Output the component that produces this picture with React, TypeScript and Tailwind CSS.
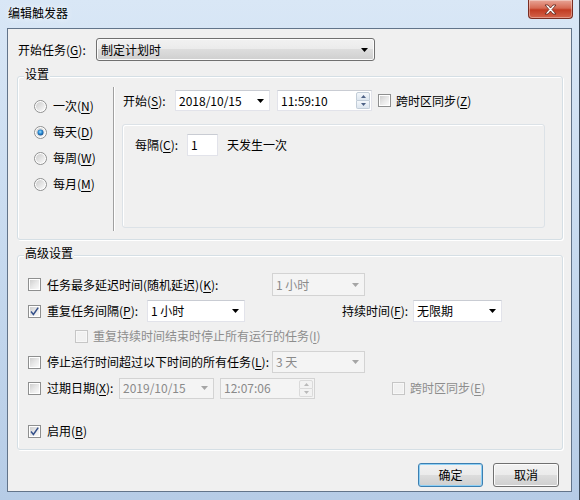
import type { ReactNode } from 'react';

function Key({ children }: { children: ReactNode }) {
  return <span className="underline decoration-1 underline-offset-[2px]">{children}</span>;
}

function CheckBox({ checked = false, disabled = false }: { checked?: boolean; disabled?: boolean }) {
  return (
    <span
      className={`flex h-[13px] w-[13px] shrink-0 items-center justify-center border p-[1px] ${
        disabled ? 'border-[#c6c6c6] bg-[#f7f7f7]' : 'border-[#8e8f8f] bg-white'
      }`}
    >
      <span
        className={`relative flex h-full w-full items-center justify-center ${
          disabled ? 'bg-[#f1f1f1]' : 'bg-gradient-to-br from-[#cfcfcf] via-[#e8e8e8] to-[#fafafa]'
        }`}
      >
        {checked && (
          <svg width="11" height="11" viewBox="0 0 11 11" className="absolute">
            <path d="M2 5.5 L4.4 8.4 L9.2 1.6" fill="none" stroke="#34508a" strokeWidth="1.5" />
          </svg>
        )}
      </span>
    </span>
  );
}

function Radio({ checked = false }: { checked?: boolean }) {
  return (
    <svg width="13" height="13" viewBox="0 0 13 13" className="shrink-0">
      <defs>
        <linearGradient id="rbg" x1="0" y1="0" x2="1" y2="1">
          <stop offset="0" stopColor="#cdcdcd" />
          <stop offset="1" stopColor="#fafafa" />
        </linearGradient>
        <radialGradient id="rdot" cx="0.45" cy="0.4" r="0.6">
          <stop offset="0" stopColor="#9fe0ff" />
          <stop offset="0.5" stopColor="#2f8fd6" />
          <stop offset="1" stopColor="#134f8f" />
        </radialGradient>
      </defs>
      <circle cx="6.5" cy="6.5" r="6" fill="#fff" stroke="#8e8f8f" />
      <circle cx="6.5" cy="6.5" r="4.5" fill="url(#rbg)" />
      {checked && <circle cx="6.5" cy="6.5" r="3" fill="url(#rdot)" />}
    </svg>
  );
}

function Arrow({ disabled = false }: { disabled?: boolean }) {
  return (
    <svg width="7" height="4" viewBox="0 0 7 4" className="shrink-0">
      <path d="M0 0H7L3.5 4Z" fill={disabled ? '#a5a5a5' : '#000'} />
    </svg>
  );
}

function Spin({ disabled = false }: { disabled?: boolean }) {
  const c = disabled ? '#b9b9b9' : '#4d6185';
  const box = disabled
    ? 'border-[#dadada] bg-[#f2f2f2]'
    : 'border-[#c2cdd8] bg-gradient-to-b from-[#f4f7fb] to-[#dde6ef]';
  return (
    <div className="mr-[1px] flex h-[17px] w-[14px] shrink-0 flex-col">
      <div className={`flex flex-1 items-center justify-center rounded-t-[2px] border ${box}`}>
        <svg width="5" height="3" viewBox="0 0 5 3">
          <path d="M0 3H5L2.5 0Z" fill={c} />
        </svg>
      </div>
      <div className={`flex flex-1 items-center justify-center rounded-b-[2px] border border-t-0 ${box}`}>
        <svg width="5" height="3" viewBox="0 0 5 3">
          <path d="M0 0H5L2.5 3Z" fill={c} />
        </svg>
      </div>
    </div>
  );
}

function Field({
  text,
  w,
  h = 'h-[22px]',
  kind = 'arrow',
  disabled = false,
}: {
  text: string;
  w: string;
  h?: string;
  kind?: 'arrow' | 'spin' | 'none';
  disabled?: boolean;
}) {
  return (
    <div
      className={`flex ${w} ${h} shrink-0 items-center border ${
        disabled
          ? 'border-[#d3d3d3] bg-[#f4f4f4] text-[#8a8a8a]'
          : 'border-[#e2e3ea] border-t-[#c9ccd3] bg-white text-black'
      }`}
    >
      <span className="flex-1 pl-[3px] leading-[16px]">{text}</span>
      {kind === 'arrow' && (
        <div className="flex h-full w-[17px] items-center justify-center">
          <Arrow disabled={disabled} />
        </div>
      )}
      {kind === 'spin' && <Spin disabled={disabled} />}
    </div>
  );
}

function Group({ title, h, children }: { title: string; h: string; children: ReactNode }) {
  return (
    <div
      className={`relative ml-[9px] w-[546px] ${h} rounded-[3px] border border-[#d5dfe5] shadow-[inset_1px_1px_0_#ffffff,1px_1px_0_#ffffff]`}
    >
      <span className="absolute -top-[11px] left-[6px] bg-[#f0f0f0] px-[1px] leading-[16px]">{title}</span>
      {children}
    </div>
  );
}

function Button({ children, def = false, w }: { children: ReactNode; def?: boolean; w: string }) {
  return (
    <button
      className={`flex h-[24px] ${w} items-center justify-center rounded-[3px] border bg-[linear-gradient(to_bottom,#f2f2f2_0%,#ebebeb_49%,#dddddd_50%,#cfcfcf_100%)] leading-[16px] ${
        def
          ? 'border-[#3c7fb1] shadow-[inset_0_0_0_1px_#8fd0f5]'
          : 'border-[#707070] shadow-[inset_0_0_0_1px_#fcfcfc]'
      }`}
    >
      {children}
    </button>
  );
}

export default function App() {
  return (
    <div className="relative h-[500px] w-[580px] overflow-hidden border-r border-[#3d4b5b] bg-gradient-to-b from-[#d9e7f6] via-[#c7daef] to-[#b6cce6] font-['Noto_Sans_CJK_SC','Microsoft_YaHei',sans-serif] text-[12px] text-black">
      {/* title bar */}
      <div className="flex h-[28px] items-start justify-between">
        <span className="pl-[8px] pt-[5px] leading-[16px] [text-shadow:0_0_6px_#ffffff]">编辑触发器</span>
        <div className="mr-[6px] flex h-[19px] w-[45px] items-center justify-center rounded-b-[4px] border border-t-0 border-[#7a2d22] bg-[linear-gradient(to_bottom,#e8a597_0%,#d66a53_45%,#c13b22_55%,#d4644b_100%)] shadow-[inset_0_0_0_1px_rgba(255,255,255,0.35)]">
          <svg width="13" height="11" viewBox="0 0 13 11">
            <path
              d="M1 1h3l2.5 3 2.5-3h3L8 5.5 12 10H9L6.5 7 4 10H1l4-4.5z"
              fill="#fff"
              stroke="#5a2219"
              strokeWidth="0.8"
            />
          </svg>
        </div>
      </div>

      {/* client area */}
      <div className="ml-[7px] h-[464px] w-[565px] border border-[#62748a] bg-[#f0f0f0]">
        <div className="mt-[9px] flex h-[23px] items-center pl-[10px]">
          <span className="w-[78px] leading-[16px]">
            开始任务(<Key>G</Key>):
          </span>
          <div className="flex h-[23px] w-[279px] items-center rounded-[3px] border border-[#707070] bg-[linear-gradient(to_bottom,#f2f2f2_0%,#ebebeb_49%,#dddddd_50%,#cfcfcf_100%)] shadow-[inset_0_0_0_1px_#fcfcfc]">
            <span className="flex-1 pl-[4px] leading-[16px]">制定计划时</span>
            <div className="flex w-[20px] justify-center">
              <Arrow />
            </div>
          </div>
        </div>

        {/* 设置 */}
        <div className="mt-[15px]">
          <Group title="设置" h="h-[164px]">
            <div className="flex">
              <div className="flex w-[95px] flex-col pl-[16px] pt-[16px]">
                {[
                  ['一次', 'N', false],
                  ['每天', 'D', true],
                  ['每周', 'W', false],
                  ['每月', 'M', false],
                ].map(([t, k, c]) => (
                  <div key={t as string} className="flex h-[26px] items-center gap-[6px]">
                    <Radio checked={c as boolean} />
                    <span className="leading-[16px]">
                      {t}(<Key>{k}</Key>)
                    </span>
                  </div>
                ))}
              </div>
              <div className="mt-[10px] h-[144px] w-[2px] border-l border-r border-l-[#a0a0a0] border-r-white" />
              <div className="ml-[7px] flex flex-col">
                <div className="mt-[13px] flex h-[21px] items-center">
                  <span className="w-[53px] pl-[1px] leading-[16px]">
                    开始(<Key>S</Key>):
                  </span>
                  <Field text="2018/10/15" w="w-[95px]" h="h-[21px]" />
                  <div className="ml-[7px]">
                    <Field text="11:59:10" w="w-[95px]" h="h-[21px]" kind="spin" />
                  </div>
                  <div className="ml-[6px]">
                    <CheckBox />
                  </div>
                  <span className="ml-[5px] leading-[16px]">
                    跨时区同步(<Key>Z</Key>)
                  </span>
                </div>
                <div className="mt-[13px] h-[104px] w-[423px] rounded-[3px] border border-[#dce2e7] shadow-[inset_1px_1px_0_#ffffff]">
                  <div className="mt-[9px] flex h-[22px] items-center pl-[12px]">
                    <span className="w-[52px] leading-[16px]">
                      每隔(<Key>C</Key>):
                    </span>
                    <Field text="1" w="w-[31px]" kind="none" />
                    <span className="ml-[9px] leading-[16px]">天发生一次</span>
                  </div>
                </div>
              </div>
            </div>
          </Group>
        </div>

        {/* 高级设置 */}
        <div className="mt-[15px]">
          <Group title="高级设置" h="h-[195px]">
            <div className="flex flex-col pl-[10px]">
              <div className="mt-[17px] flex h-[23px] items-center">
                <CheckBox />
                <span className="ml-[6px] w-[225px] leading-[16px]">
                  任务最多延迟时间(随机延迟)(<Key>K</Key>):
                </span>
                <Field text="1 小时" w="w-[93px]" h="h-[23px]" disabled />
              </div>
              <div className="mt-[4px] flex h-[22px] items-center">
                <CheckBox checked />
                <span className="ml-[6px] w-[100px] leading-[16px]">
                  重复任务间隔(<Key>P</Key>):
                </span>
                <Field text="1 小时" w="w-[98px]" />
                <span className="ml-[97px] w-[71px] leading-[16px]">
                  持续时间(<Key>F</Key>):
                </span>
                <Field text="无限期" w="w-[89px]" />
              </div>
              <div className="mt-[3px] flex h-[22px] items-center">
                <div className="ml-[47px]">
                  <CheckBox disabled />
                </div>
                <span className="ml-[5px] leading-[16px] text-[#8d8d8d]">
                  重复持续时间结束时停止所有运行的任务(<Key>I</Key>)
                </span>
              </div>
              <div className="mt-[4px] flex h-[22px] items-center">
                <CheckBox />
                <span className="ml-[6px] w-[225px] leading-[16px]">
                  停止运行时间超过以下时间的所有任务(<Key>L</Key>):
                </span>
                <Field text="3 天" w="w-[93px]" disabled />
              </div>
              <div className="mt-[4px] flex h-[22px] items-center">
                <CheckBox />
                <span className="ml-[6px] w-[72px] leading-[16px]">
                  过期日期(<Key>X</Key>):
                </span>
                <Field text="2019/10/15" w="w-[95px]" h="h-[21px]" disabled />
                <div className="ml-[6px]">
                  <Field text="12:07:06" w="w-[95px]" h="h-[21px]" kind="spin" disabled />
                </div>
                <div className="ml-[77px]">
                  <CheckBox disabled />
                </div>
                <span className="ml-[5px] leading-[16px] text-[#8d8d8d]">
                  跨时区同步(<Key>E</Key>)
                </span>
              </div>
              <div className="mt-[21px] flex h-[22px] items-center">
                <CheckBox checked />
                <span className="ml-[6px] leading-[16px]">
                  启用(<Key>B</Key>)
                </span>
              </div>
            </div>
          </Group>
        </div>

        <div className="mt-[13px] flex justify-end gap-[10px] pr-[12px]">
          <Button def w="w-[65px]">
            确定
          </Button>
          <Button w="w-[66px]">取消</Button>
        </div>
      </div>
    </div>
  );
}
